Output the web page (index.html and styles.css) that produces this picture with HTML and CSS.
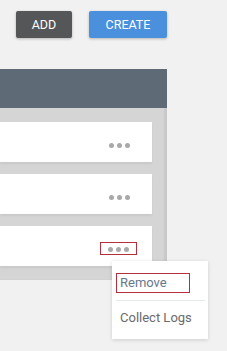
FILE: index.html
```html
<!DOCTYPE html>
<html lang="en">
<head>
  <meta charset="UTF-8" />
  <title>Devices</title>
  <link rel="stylesheet" href="styles.css">
</head>
<body>
  <div class="toolbar">
    <button class="btn btn-dark">ADD</button>
    <button class="btn btn-blue">CREATE</button>
  </div>

  <div class="panel-wrap">
    <div class="panel">
      <div class="panel-head"></div>
      <div class="panel-body">
        <div class="row"><span class="dots"><i></i><i></i><i></i></span></div>
        <div class="row"><span class="dots"><i></i><i></i><i></i></span></div>
        <div class="row"><span class="dots open"><i></i><i></i><i></i></span></div>
      </div>
    </div>

    <div class="menu">
      <div class="menu-item selected">Remove</div>
      <div class="menu-sep"></div>
      <div class="menu-item">Collect Logs</div>
    </div>
  </div>
</body>
</html>
```

FILE: styles.css
```css
body {
  margin: 0;
  background: #f1f1f1;
  font-family: Roboto, 'Liberation Sans', sans-serif;
  width: 227px;
  height: 351px;
  overflow: hidden;
}

.toolbar {
  display: flex;
  gap: 17px;
  padding: 11px 0 0 16px;
  height: 58px;
  box-sizing: border-box;
}

.btn {
  height: 27px;
  border: none;
  border-radius: 2px;
  color: #fff;
  font-family: Roboto, sans-serif;
  font-size: 12.5px;
  padding: 0;
  box-shadow: 0 1px 3px rgba(0, 0, 0, 0.25);
}

.btn-dark {
  width: 56px;
  background: #555657;
}

.btn-blue {
  width: 78px;
  background: #4a90dc;
}

.panel-wrap {
  position: relative;
  margin-top: 11px;
}

.panel {
  width: 167px;
  background: #d5d5d5;
  box-shadow: inset -3px 0 2px rgba(0, 0, 0, 0.06);
}

.panel-head {
  height: 39px;
  background: #5e6a75;
}

.panel-body {
  display: flex;
  flex-direction: column;
  gap: 12px;
  padding: 14px 15px 14px 0;
}

.row {
  height: 40px;
  background: #fff;
  display: flex;
  align-items: center;
  justify-content: flex-end;
  padding-right: 22px;
  box-shadow: 0 2px 2px rgba(0, 0, 0, 0.06);
}

.dots {
  display: flex;
  gap: 3px;
  padding: 4px 7px 1px;
  margin-top: 4px;
  border: 1px solid transparent;
  margin-right: -8px;
}

.dots i {
  width: 5px;
  height: 5px;
  border-radius: 50%;
  background: #a9a9a9;
}

.dots.open {
  border-color: #b5303e;
  padding: 4px 7px 2px;
  margin-right: -7px;
}

.menu {
  position: absolute;
  left: 112px;
  top: 192px;
  width: 96px;
  background: #fff;
  padding: 12px 3px 6px 4px;
  box-sizing: border-box;
  box-shadow: 0 1px 4px rgba(0, 0, 0, 0.15);
}

.menu-item {
  font-size: 13px;
  color: #6a6a6a;
  padding: 9px 4px 8px;
}

.menu-item.selected {
  color: #67788a;
  width: 74px;
  box-sizing: border-box;
  padding: 1px 3px 2px;
  border: 1px solid #b5303e;
}

.menu-sep {
  height: 1px;
  background: #e3eaee;
  margin: 7px 0 0;
}
```
